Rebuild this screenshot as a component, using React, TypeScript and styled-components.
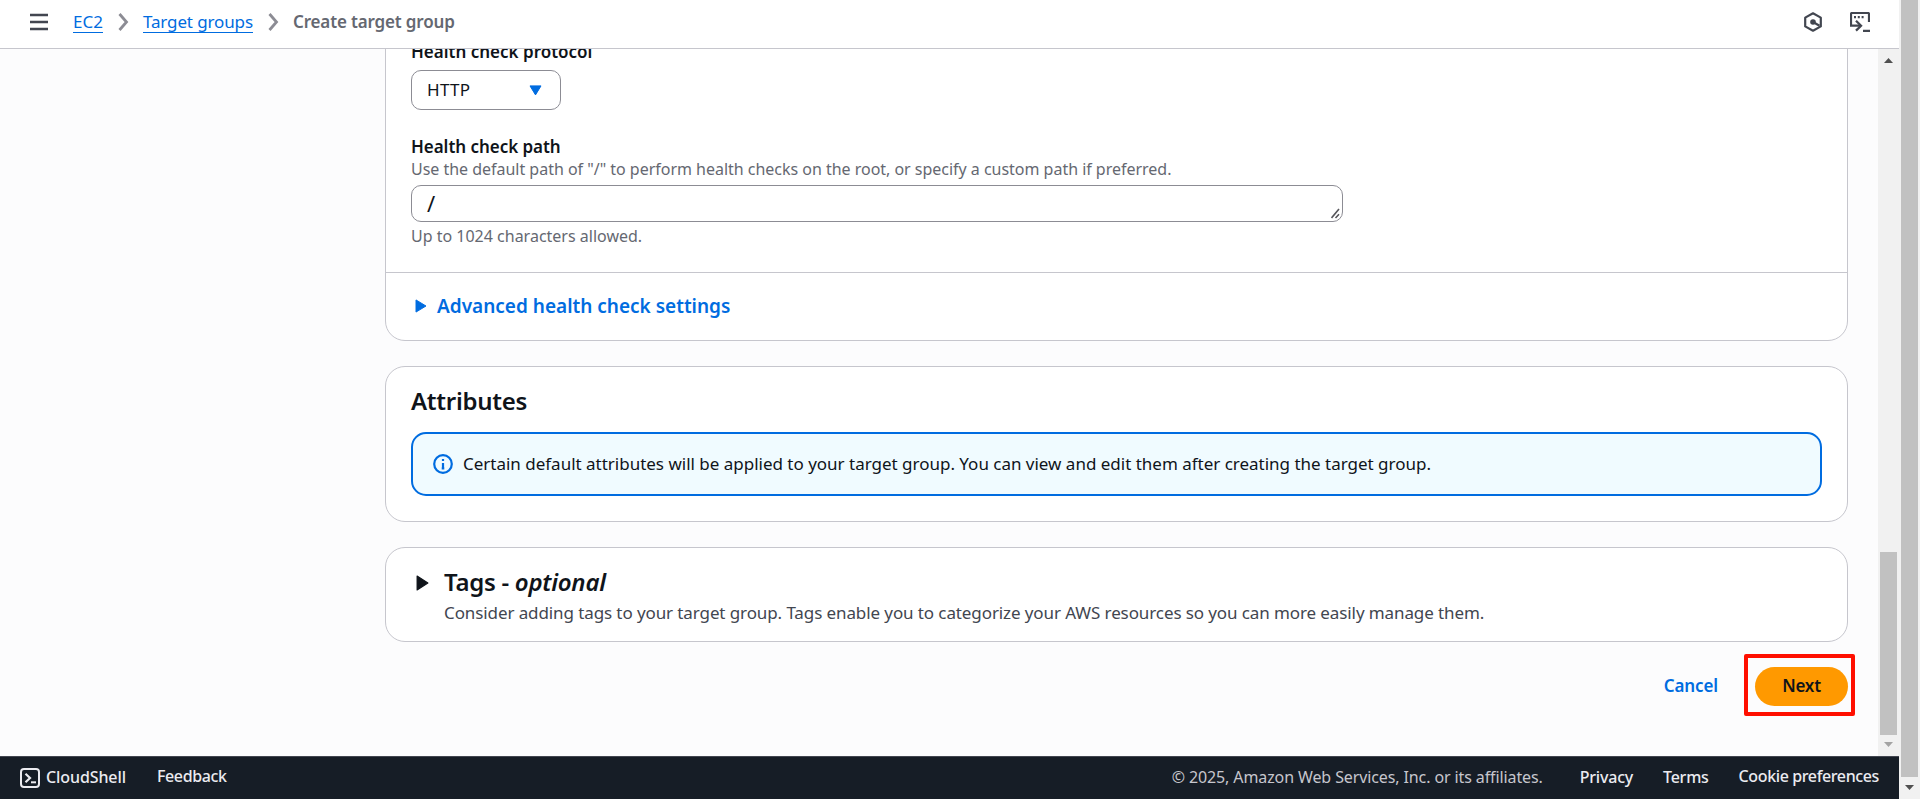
import React from "react";
import styled, { createGlobalStyle } from "styled-components";

const GlobalStyle = createGlobalStyle`
  *, *::before, *::after { box-sizing: border-box; }
  body {
    margin: 0;
    background: #fcfcfd;
    color: #0f141a;
    font-family: "Noto Sans", "Open Sans", sans-serif;
    font-size: 17px;
    overflow: hidden;
  }
`;

const Page = styled.div`
  display: flex;
  width: 1920px;
  height: 799px;
`;

const Console = styled.div`
  display: flex;
  flex-direction: column;
  width: 1899px;
`;

const Header = styled.header`
  display: flex;
  align-items: center;
  justify-content: space-between;
  height: 49px;
  padding: 0 29px 4px 29px;
  background: #fff;
  border-bottom: 1px solid #c6c6cd;
`;

const HeaderGroup = styled.div<{ $gap: number }>`
  display: flex;
  align-items: center;
  gap: ${(p) => p.$gap}px;
`;

const Crumbs = styled.nav`
  display: flex;
  align-items: center;
  gap: 14px;
`;

const CrumbLink = styled.a<{ $spacing?: number }>`
  line-height: 21px;
  letter-spacing: ${(p) => p.$spacing ?? 0}px;
  color: #006ce0;
  border-bottom: 1px solid #006ce0;
  white-space: nowrap;
`;

const CurrentCrumb = styled.span`
  line-height: 22px;
  font-weight: 600;
  letter-spacing: -0.15px;
  color: #656871;
  white-space: nowrap;
`;

const Body = styled.div`
  display: flex;
  height: 707px;
`;

const Main = styled.main`
  display: flex;
  flex-direction: column;
  justify-content: flex-end;
  gap: 25px;
  flex: 1;
  padding: 0 30px 50px 385px;
  overflow: hidden;
`;

const Card = styled.section`
  flex: none;
  background: #fff;
  border: 1px solid #c6c6cd;
  border-radius: 20px;
`;

const HealthForm = styled.div`
  display: flex;
  flex-direction: column;
  align-items: flex-start;
  gap: 25px;
  padding: 25px 25px 26px;
`;

const Field = styled.div`
  display: flex;
  flex-direction: column;
`;

const Label = styled.label<{ $spacing?: number }>`
  line-height: 24px;
  font-weight: 600;
  letter-spacing: ${(p) => p.$spacing ?? 0}px;
`;

const Hint = styled.div<{ $spacing?: number }>`
  line-height: 20px;
  font-size: 16px;
  letter-spacing: ${(p) => p.$spacing ?? 0}px;
  color: #656871;
`;

const Select = styled.div`
  display: flex;
  align-items: center;
  justify-content: space-between;
  width: 150px;
  height: 40px;
  margin-top: 6px;
  padding: 0 18px 0 15px;
  border: 1px solid #8c8c94;
  border-radius: 10px;
  letter-spacing: 0.3px;
`;

const SelectValue = styled.span`
  padding-bottom: 2px;
`;

const PathInput = styled.div`
  display: flex;
  align-items: flex-end;
  justify-content: space-between;
  width: 932px;
  height: 37px;
  margin: 6px 0 4px;
  padding: 0 2px 2px 15px;
  border: 1px solid #8c8c94;
  border-radius: 10px;
`;

const PathValue = styled.span`
  line-height: 32px;
  font-size: 22px;
`;

const Expander = styled.div`
  display: flex;
  align-items: center;
  gap: 10px;
  height: 68px;
  padding: 0 0 2px 29px;
  border-top: 1px solid #c6c6cd;
  color: #006ce0;
  font-size: 19px;
  font-weight: 600;
`;

const AttributesCard = styled(Card)`
  height: 156px;
  padding: 19px 25px 0;
`;

const Title = styled.h2`
  margin: 0;
  font-size: 24px;
  line-height: 30px;
  font-weight: 600;
  letter-spacing: -0.28px;
`;

const OptionalMark = styled.i`
  letter-spacing: -0.25px;
`;

const InfoAlert = styled.div`
  display: flex;
  align-items: center;
  gap: 10px;
  height: 64px;
  margin-top: 16px;
  padding: 0 20px;
  background: #f0fbff;
  border: 2px solid #006ce0;
  border-radius: 15px;
  white-space: nowrap;
`;

const AlertText = styled.span`
  padding-bottom: 2px;
  letter-spacing: -0.01px;
`;

const TagsCard = styled(Card)`
  display: flex;
  gap: 15px;
  height: 95px;
  padding: 19px 0 0 30px;
  white-space: nowrap;
`;

const TagsCaret = styled.div`
  padding-top: 8px;
  line-height: 0;
`;

const TagsDescription = styled.p`
  margin: 4px 0 0;
  line-height: 24px;
  letter-spacing: -0.1px;
  color: #424650;
`;

const Actions = styled.div`
  display: flex;
  flex: none;
  justify-content: flex-end;
  align-items: center;
  gap: 37px;
  height: 39px;
`;

const CancelButton = styled.a`
  padding-bottom: 2px;
  color: #006ce0;
  font-weight: 600;
  letter-spacing: -0.1px;
`;

const NextButton = styled.button`
  position: relative;
  width: 93px;
  height: 39px;
  padding: 0 0 2px;
  border: 0;
  border-radius: 20px;
  background: #ff9900;
  color: #0f141a;
  font: 600 17px "Noto Sans", sans-serif;
  letter-spacing: -0.2px;
`;

const Highlight = styled.span`
  position: absolute;
  inset: -13px -7px -10px -11px;
  border: 4px solid #ff0f00;
  border-radius: 2px;
`;

const ScrollTrack = styled.div`
  display: flex;
  flex-direction: column;
  flex: none;
  align-items: center;
  width: 21px;
  background: #f1f1f1;
`;

const InnerTrack = styled(ScrollTrack)`
  justify-content: space-between;
  padding: 9px 0 9px;
`;

const InnerLower = styled.div`
  display: flex;
  flex-direction: column;
  align-items: center;
  gap: 7px;
`;

const Thumb = styled.div<{ $height: number }>`
  width: 17px;
  height: ${(p) => p.$height}px;
  background: #c1c1c1;
`;

const OuterTrack = styled(ScrollTrack)`
  gap: 8px;
`;

const Footer = styled.footer`
  display: flex;
  justify-content: space-between;
  height: 43px;
  padding: 0 20px;
  background: #161d26;
  border-top: 1px solid #424650;
  color: #ebebf0;
  font-size: 16px;
  font-weight: 500;
  line-height: 41px;
  white-space: nowrap;
`;

const FooterGroup = styled.div<{ $gap: number }>`
  display: flex;
  gap: ${(p) => p.$gap}px;
`;

const FooterItem = styled.a<{ $spacing: number; $raised?: boolean }>`
  display: flex;
  align-items: center;
  gap: 6px;
  line-height: ${(p) => (p.$raised ? 39 : 41)}px;
  height: ${(p) => (p.$raised ? 39 : 41)}px;
  letter-spacing: ${(p) => p.$spacing}px;
`;

const Copyright = styled.span`
  font-weight: 400;
  letter-spacing: -0.11px;
  color: #c6c6cd;
`;

const MenuIcon = () => (
  <svg width="20" height="20" viewBox="0 0 20 20" stroke="#424650" strokeWidth="2.4">
    <path d="M1 3h18M1 10h18M1 17h18" />
  </svg>
);

const ChevronIcon = () => (
  <svg width="12" height="20" viewBox="0 0 12 20" fill="none" stroke="#8c8c94" strokeWidth="2.8">
    <path d="M2.500 2l7 8-7 8" />
  </svg>
);

const HexagonIcon = () => (
  <svg width="20" height="22" viewBox="0 0 20 22" fill="none" stroke="#424650" strokeWidth="2.2" strokeLinejoin="round">
    <path d="M10 2.3l7.8 4.3v8.8L10 19.7l-7.8-4.3V6.600z" />
    <circle cx="10" cy="11" r="2.8" fill="#424650" stroke="none" />
    <path d="M10 11l6.500 3.700" />
  </svg>
);

const TerminalIcon = () => (
  <svg width="20" height="20" viewBox="0 0 20 20" fill="none" stroke="#424650" strokeWidth="2.2">
    <path d="M19 10V2a1 1 0 0 0-1-1H2a1 1 0 0 0-1 1v11.700h9.500" />
    <path d="M6 8.800l5 4.900-5 4.900" strokeWidth="2.300" />
    <path d="M4 5.100h2M7.800 5.100h2M11.600 5.100h2M13 18.900h7" />
  </svg>
);

const InfoIcon = () => (
  <svg width="20" height="20" viewBox="0 0 20 20" fill="none" stroke="#006ce0" strokeWidth="2.200">
    <circle cx="10" cy="10" r="8.800" />
    <path d="M10 5v2M10 9v6M8.700 14.300h2.600" />
  </svg>
);

const CloudShellIcon = () => (
  <svg width="20" height="20" viewBox="0 0 20 20" fill="none" stroke="#ebebf0" strokeWidth="2">
    <rect x="1" y="1" width="18" height="18" rx="3" />
    <path d="M5.500 5.800l4.500 4.200-4.500 4.200" strokeWidth="2.200" />
    <path d="M11 14.300h5" />
  </svg>
);

const CaretDown = () => (
  <svg width="13" height="11" viewBox="0 0 13 11" fill="#006ce0" stroke="#006ce0" strokeLinejoin="round">
    <path d="M1 .9h11L6.500 9.900z" />
  </svg>
);

const CaretRight = ({ color, width, height }: { color: string; width: number; height: number }) => (
  <svg width={width} height={height} viewBox="0 0 12 15" preserveAspectRatio="none" fill={color} stroke={color} strokeLinejoin="round">
    <path d="M1 1v13l10-6.500z" />
  </svg>
);

const ResizeGrip = () => (
  <svg width="9" height="11" viewBox="0 0 9 11" fill="none" stroke="#55555a" strokeWidth="1.600">
    <path d="M.5 10L8 1M4.500 10L8 6.300" />
  </svg>
);

const ScrollArrow = ({ up, color }: { up?: boolean; color: string }) => (
  <svg width="9" height="5" viewBox="0 0 9 5" fill={color}>
    <path d={up ? "M0 5h9L4.500 0z" : "M0 0h9L4.500 5z"} />
  </svg>
);

export default function App() {
  return (
    <Page>
      <GlobalStyle />
      <Console>
        <Header>
          <HeaderGroup $gap={24}>
            <MenuIcon />
            <Crumbs>
              <CrumbLink>EC2</CrumbLink>
              <ChevronIcon />
              <CrumbLink $spacing={-0.12}>Target groups</CrumbLink>
              <ChevronIcon />
              <CurrentCrumb>Create target group</CurrentCrumb>
            </Crumbs>
          </HeaderGroup>
          <HeaderGroup $gap={27}>
            <HexagonIcon />
            <TerminalIcon />
          </HeaderGroup>
        </Header>
        <Body>
          <Main>
            <Card>
              <HealthForm>
                <Field>
                  <Label>Health check protocol</Label>
                  <Select>
                    <SelectValue>HTTP</SelectValue>
                    <CaretDown />
                  </Select>
                </Field>
                <Field>
                  <Label $spacing={-0.04}>Health check path</Label>
                  <Hint $spacing={-0.02}>
                    Use the default path of "/" to perform health checks on the root, or specify a custom path if preferred.
                  </Hint>
                  <PathInput>
                    <PathValue>/</PathValue>
                    <ResizeGrip />
                  </PathInput>
                  <Hint>Up to 1024 characters allowed.</Hint>
                </Field>
              </HealthForm>
              <Expander>
                <CaretRight color="#006ce0" width={12} height={14} />
                Advanced health check settings
              </Expander>
            </Card>
            <AttributesCard>
              <Title>Attributes</Title>
              <InfoAlert>
                <InfoIcon />
                <AlertText>
                  Certain default attributes will be applied to your target group. You can view and edit them after creating the target group.
                </AlertText>
              </InfoAlert>
            </AttributesCard>
            <TagsCard>
              <TagsCaret>
                <CaretRight color="#0f141a" width={13} height={16} />
              </TagsCaret>
              <div>
                <Title>
                  Tags - <OptionalMark>optional</OptionalMark>
                </Title>
                <TagsDescription>
                  Consider adding tags to your target group. Tags enable you to categorize your AWS resources so you can more easily manage them.
                </TagsDescription>
              </div>
            </TagsCard>
            <Actions>
              <CancelButton>Cancel</CancelButton>
              <NextButton>
                Next
                <Highlight />
              </NextButton>
            </Actions>
          </Main>
          <InnerTrack>
            <ScrollArrow up color="#505050" />
            <InnerLower>
              <Thumb $height={183} />
              <ScrollArrow color="#a3a3a3" />
            </InnerLower>
          </InnerTrack>
        </Body>
        <Footer>
          <FooterGroup $gap={31}>
            <FooterItem $spacing={-0.1}>
              <CloudShellIcon />
              CloudShell
            </FooterItem>
            <FooterItem $spacing={-0.35} $raised>
              Feedback
            </FooterItem>
          </FooterGroup>
          <FooterGroup $gap={30}>
            <FooterGroup $gap={37}>
              <Copyright>© 2025, Amazon Web Services, Inc. or its affiliates.</Copyright>
              <FooterItem $spacing={-0.2}>Privacy</FooterItem>
            </FooterGroup>
            <FooterItem $spacing={-0.25}>Terms</FooterItem>
            <FooterItem $spacing={-0.38} $raised>
              Cookie preferences
            </FooterItem>
          </FooterGroup>
        </Footer>
      </Console>
      <OuterTrack>
        <Thumb $height={777} />
        <ScrollArrow color="#505050" />
      </OuterTrack>
    </Page>
  );
}
